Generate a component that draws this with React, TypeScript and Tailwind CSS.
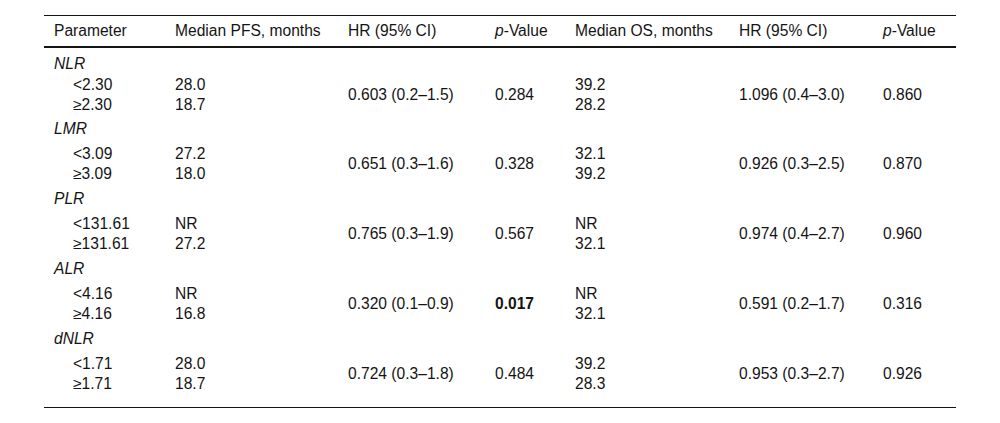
import React from "react";

type Group = {
  label: string;
  subs: [string, string];
  pfs: [string, string];
  hr1: string;
  p1: string;
  p1Bold?: boolean;
  os: [string, string];
  hr2: string;
  p2: string;
};

const groups: Group[] = [
  { label: "NLR", subs: ["<2.30", "≥2.30"], pfs: ["28.0", "18.7"], hr1: "0.603 (0.2–1.5)", p1: "0.284", os: ["39.2", "28.2"], hr2: "1.096 (0.4–3.0)", p2: "0.860" },
  { label: "LMR", subs: ["<3.09", "≥3.09"], pfs: ["27.2", "18.0"], hr1: "0.651 (0.3–1.6)", p1: "0.328", os: ["32.1", "39.2"], hr2: "0.926 (0.3–2.5)", p2: "0.870" },
  { label: "PLR", subs: ["<131.61", "≥131.61"], pfs: ["NR", "27.2"], hr1: "0.765 (0.3–1.9)", p1: "0.567", os: ["NR", "32.1"], hr2: "0.974 (0.4–2.7)", p2: "0.960" },
  { label: "ALR", subs: ["<4.16", "≥4.16"], pfs: ["NR", "16.8"], hr1: "0.320 (0.1–0.9)", p1: "0.017", p1Bold: true, os: ["NR", "32.1"], hr2: "0.591 (0.2–1.7)", p2: "0.316" },
  { label: "dNLR", subs: ["<1.71", "≥1.71"], pfs: ["28.0", "18.7"], hr1: "0.724 (0.3–1.8)", p1: "0.484", os: ["39.2", "28.3"], hr2: "0.953 (0.3–2.7)", p2: "0.926" },
];

export default function App() {
  return (
    <div className="w-[1000px] h-[423px] bg-white pt-[15px] pl-[44px]" style={{ fontFamily: '"Liberation Sans", Arial, sans-serif' }}>
      <table className="w-[912px] table-fixed border-collapse text-[15.6px] leading-5 text-[#141414]">
        <colgroup>
          <col className="w-[121px]" />
          <col className="w-[173px]" />
          <col className="w-[147px]" />
          <col className="w-[80px]" />
          <col className="w-[164px]" />
          <col className="w-[144px]" />
          <col className="w-[83px]" />
        </colgroup>
        <thead>
          <tr className="border-t border-b-2 border-[#141414] text-left">
            <th className="font-normal px-[10px] py-[5px]">Parameter</th>
            <th className="font-normal px-[10px] py-[5px]">Median PFS, months</th>
            <th className="font-normal px-[10px] py-[5px]">HR (95% CI)</th>
            <th className="font-normal px-[10px] py-[5px]"><i>p</i>-Value</th>
            <th className="font-normal px-[10px] py-[5px]">Median OS, months</th>
            <th className="font-normal px-[10px] py-[5px]">HR (95% CI)</th>
            <th className="font-normal px-[10px] py-[5px]"><i>p</i>-Value</th>
          </tr>
        </thead>
        <tbody className="border-b border-[#141414]">
          {groups.map((g, i) => {
            const first = i === 0;
            const last = i === groups.length - 1;
            const pad = first ? "pt-[1px] pb-[4px]" : last ? "pt-[5px] pb-[13px]" : "pt-[5px] pb-[5px]";
            return (
              <React.Fragment key={g.label}>
                <tr>
                  <td colSpan={7} className={`px-[10px] italic ${first ? "pt-[6px]" : ""}`}>{g.label}</td>
                </tr>
                <tr className="align-middle">
                  <td className={`pl-[29px] pr-[4px] ${pad}`}>{g.subs[0]}<br />{g.subs[1]}</td>
                  <td className={`px-[10px] ${pad}`}>{g.pfs[0]}<br />{g.pfs[1]}</td>
                  <td className={`px-[10px] ${pad}`}>{g.hr1}</td>
                  <td className={`px-[10px] ${pad} ${g.p1Bold ? "font-bold" : ""}`}>{g.p1}</td>
                  <td className={`px-[10px] ${pad}`}>{g.os[0]}<br />{g.os[1]}</td>
                  <td className={`px-[10px] ${pad}`}>{g.hr2}</td>
                  <td className={`px-[10px] ${pad}`}>{g.p2}</td>
                </tr>
              </React.Fragment>
            );
          })}
        </tbody>
      </table>
    </div>
  );
}
